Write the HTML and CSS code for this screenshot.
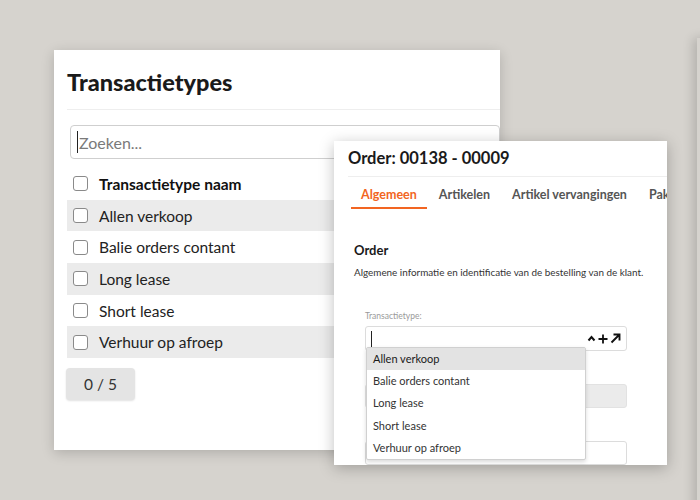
FILE: index.html
```html
<!DOCTYPE html>
<html lang="nl">
<head>
  <meta charset="UTF-8">
  <title>Transactietypes</title>
  <link rel="stylesheet" href="styles.css">
</head>
<body>
  <div class="desk">
    <div class="edge-panel"></div>

    <div class="window list-window">
      <h1 class="list-title">Transactietypes</h1>
      <div class="search-box">
        <span class="caret"></span>
        <span class="placeholder">Zoeken...</span>
      </div>
      <div class="type-table">
        <div class="type-row head"><span class="check"></span>Transactietype naam</div>
        <div class="type-row alt"><span class="check"></span>Allen verkoop</div>
        <div class="type-row"><span class="check"></span>Balie orders contant</div>
        <div class="type-row alt"><span class="check"></span>Long lease</div>
        <div class="type-row"><span class="check"></span>Short lease</div>
        <div class="type-row alt"><span class="check"></span>Verhuur op afroep</div>
      </div>
      <div class="counter">0 / 5</div>
    </div>

    <div class="window order-window">
      <div class="order-title">Order: 00138 - 00009</div>
      <div class="tabs">
        <span class="tab active">Algemeen</span>
        <span class="tab">Artikelen</span>
        <span class="tab">Artikel vervangingen</span>
        <span class="tab">Pakbonnen</span>
      </div>
      <div class="order-body">
        <div class="section-title">Order</div>
        <div class="section-desc">Algemene informatie en identificatie van de bestelling van de klant.</div>
        <div class="field">
          <div class="field-label">Transactietype:</div>
          <div class="select-box">
            <span class="caret small"></span>
            <span class="select-icons">
              <svg width="9" height="7" viewBox="0 0 9 7"><polyline points="1.5,5.5 4.5,2 7.5,5.5" fill="none" stroke="#111" stroke-width="2"/></svg>
              <svg width="10" height="10" viewBox="0 0 10 10"><path d="M5 0.5V9.5M0.5 5H9.5" stroke="#111" stroke-width="1.8"/></svg>
              <svg width="11" height="11" viewBox="0 0 11 11"><path d="M1.5 9.5L9 2M3.5 1.5H9.5V7.5" fill="none" stroke="#111" stroke-width="1.9"/></svg>
            </span>
            <div class="dropdown">
              <div class="dropdown-item active">Allen verkoop</div>
              <div class="dropdown-item">Balie orders contant</div>
              <div class="dropdown-item">Long lease</div>
              <div class="dropdown-item">Short lease</div>
              <div class="dropdown-item">Verhuur op afroep</div>
            </div>
          </div>
        </div>
        <div class="field">
          <div class="field-label">&nbsp;</div>
          <div class="plain-box disabled"></div>
        </div>
        <div class="field">
          <div class="field-label">&nbsp;</div>
          <div class="plain-box"></div>
        </div>
      </div>
    </div>
  </div>
</body>
</html>
```

FILE: styles.css
```css
html, body {
  margin: 0;
  padding: 0;
  height: 100%;
  font-family: Lato, 'Open Sans', Arial, sans-serif;
  background-color: #d6d3ce;
  overflow: hidden;
}
.desk {
  position: relative;
  width: 700px;
  height: 500px;
  overflow: hidden;
}
.edge-panel {
  position: absolute;
  left: 697px;
  top: 38px;
  width: 100px;
  height: 520px;
  background: #d6d3ce;
  box-shadow: -4px 0 10px rgba(0,0,0,0.16);
}
.window {
  position: absolute;
  background: white;
  box-sizing: border-box;
  overflow: hidden;
}
.list-window {
  left: 54px;
  top: 50px;
  width: 446px;
  height: 400px;
  padding: 0 0 0 13px;
  box-shadow: 0 3px 12px rgba(0,0,0,0.18);
}
.list-title {
  margin: 0;
  padding: 20px 0 15px;
  font-size: 23.5px;
  font-weight: 900;
  color: #1a1a1a;
  line-height: 24px;
  border-bottom: 1px solid #eeeeee;
}
.search-box {
  margin: 15px 0 9px 3px;
  height: 32px;
  border: 1px solid #cfcfcf;
  border-radius: 4px;
  display: flex;
  align-items: center;
  padding-left: 6px;
  gap: 1px;
}
.caret {
  display: inline-block;
  width: 1px;
  height: 22px;
  background: #222;
}
.caret.small {
  height: 16px;
}
.placeholder {
  font-size: 16px;
  color: #7a7a7a;
}
.type-table {
  display: flex;
  flex-direction: column;
}
.type-row {
  height: 31.7px;
  display: flex;
  align-items: center;
  gap: 11px;
  padding-left: 6px;
  font-size: 15.5px;
  color: #222;
}
.type-row.head {
  font-weight: 700;
  color: #111;
}
.type-row.alt {
  background: #ebebeb;
}
.check {
  width: 13px;
  height: 13px;
  border: 1px solid #8a8a8a;
  border-radius: 3px;
  background: white;
}
.counter {
  margin-top: 10px;
  width: 69px;
  height: 32px;
  margin-left: -1px;
  background: #e4e4e4;
  border-radius: 4px;
  box-shadow: 0 1px 2px rgba(0,0,0,0.12);
  display: flex;
  align-items: center;
  justify-content: center;
  font-size: 15.5px;
  color: #333;
}
.order-window {
  left: 334px;
  top: 141px;
  width: 333px;
  height: 324px;
  padding-left: 14px;
  box-shadow: 0 3px 14px rgba(0,0,0,0.25);
}
.order-title {
  padding: 10px 0 10px;
  font-size: 16.5px;
  font-weight: 700;
  color: #1a1a1a;
  line-height: 15px;
  border-bottom: 1px solid #eeeeee;
}
.tabs {
  display: flex;
  gap: 2px;
  padding-left: 3px;
  margin-top: 11px;
  white-space: nowrap;
}
.tab {
  padding: 0 10px 5px;
  font-size: 12.5px;
  font-weight: 700;
  color: #555;
  line-height: 14px;
  border-bottom: 2px solid transparent;
}
.tab.active {
  color: #f26522;
  border-bottom-color: #f26522;
}
.order-body {
  padding: 33px 0 0 6px;
}
.section-title {
  font-size: 13px;
  font-weight: 700;
  color: #1a1a1a;
}
.section-desc {
  margin-top: 8px;
  font-size: 9.9px;
  color: #333;
  white-space: nowrap;
}
.field {
  padding-left: 11px;
  padding-right: 40px;
  margin-top: 33px;
}
.field + .field {
  margin-top: 18px;
}
.field-label {
  font-size: 8.5px;
  color: #9a9a9a;
  margin-bottom: 5px;
}
.select-box {
  position: relative;
  height: 25px;
  border: 1px solid #dcdcdc;
  border-radius: 3px;
  box-sizing: border-box;
  display: flex;
  align-items: center;
  padding-left: 5px;
}
.select-icons {
  margin-left: auto;
  margin-right: 5px;
  display: flex;
  align-items: center;
  gap: 2px;
}
.dropdown {
  position: absolute;
  left: 0;
  top: 20px;
  width: 218px;
  background: white;
  border: 1px solid #d0d0d0;
  border-radius: 2px;
  box-shadow: 0 2px 4px rgba(0,0,0,0.15);
  z-index: 5;
}
.dropdown-item {
  height: 22.2px;
  line-height: 22px;
  padding-left: 6px;
  font-size: 11px;
  color: #333;
}
.dropdown-item.active {
  background: #e3e3e3;
  color: #1a1a1a;
}
.plain-box {
  height: 24px;
  border: 1px solid #dcdcdc;
  border-radius: 3px;
  box-sizing: border-box;
}
.plain-box.disabled {
  background: #ebebeb;
  border-color: #e2e2e2;
}
```
